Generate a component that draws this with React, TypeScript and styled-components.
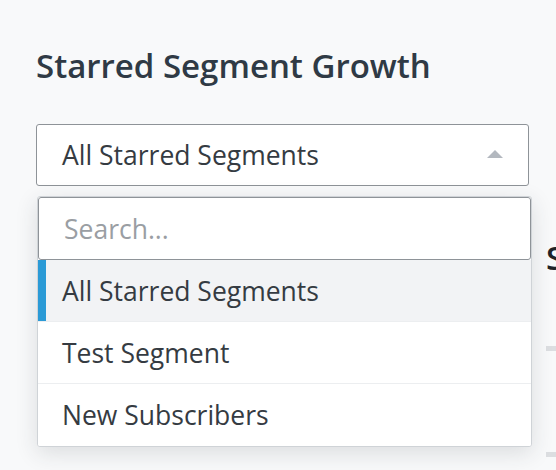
import React from "react";
import styled, { createGlobalStyle } from "styled-components";

const Global = createGlobalStyle`
  html, body { margin: 0; padding: 0; background: #f8f9fa; overflow: hidden; }
  body { font-family: "Open Sans", Lato, "Liberation Sans", sans-serif; width: 556px; height: 470px; }
  * { box-sizing: border-box; }
`;

const Page = styled.div`
  display: grid;
  grid-template-columns: 493px 1fr;
  column-gap: 17px;
  padding: 46px 0 0 36px;
  width: 556px;
  height: 470px;
  overflow: hidden;
`;

const Column = styled.div`
  display: flex;
  flex-direction: column;
  min-width: 0;
`;

const Title = styled.h2`
  margin: 0;
  font-size: 33px;
  line-height: 40px;
  font-weight: 600;
  color: #2f3a45;
  white-space: nowrap;
`;

const SelectWrap = styled.div`
  position: relative;
  margin-top: 38px;
`;

const SelectBox = styled.div`
  height: 62px;
  border: 1px solid #8e9398;
  border-radius: 3px;
  background: #fff;
  display: flex;
  align-items: center;
  justify-content: space-between;
  padding: 0 25px 0 25px;
  font-size: 26.5px;
  color: #353b42;
`;

const Caret = styled.span`
  width: 0;
  height: 0;
  border-left: 8px solid transparent;
  border-right: 8px solid transparent;
  border-bottom: 8px solid #b3b8bf;
  margin-bottom: 2px;
`;

const Menu = styled.div`
  position: absolute;
  top: 72px;
  left: 1px;
  width: 495px;
  background: #fff;
  border: 1px solid #cfd3d7;
  border-radius: 3px;
  box-shadow: 0 6px 22px rgba(40, 50, 60, 0.14);
  overflow: hidden;
  z-index: 2;
`;

const Search = styled.input`
  display: block;
  width: 100%;
  height: 63px;
  margin: 0;
  border: 1px solid #8e9398;
  border-radius: 3px;
  padding: 0 25px;
  font-family: inherit;
  font-size: 26.5px;
  color: #353b42;
  background: #fff;
  outline: none;
  &::placeholder { color: #9a9ea3; }
`;

const Item = styled.div<{ $active?: boolean }>`
  height: 62px;
  display: flex;
  align-items: center;
  padding-left: 24px;
  font-size: 26.5px;
  color: #353b42;
  background: ${(p) => (p.$active ? "#f2f3f5" : "#fff")};
  box-shadow: ${(p) => (p.$active ? "inset 8px 0 0 #2b9ad6" : "none")};
  border-bottom: 1px solid #eceef0;
  &:last-child { border-bottom: none; }
`;

const SideTitle = styled.h2`
  margin: 192px 0 0;
  font-size: 33px;
  line-height: 40px;
  font-weight: 600;
  color: #1f2328;
  white-space: nowrap;
`;

const GridLine = styled.div<{ $gap: number }>`
  height: 5px;
  width: 200px;
  background: #dcdee1;
  margin-top: ${(p) => p.$gap}px;
`;

export default function App() {
  return (
    <>
      <Global />
      <Page>
        <Column>
          <Title>Starred Segment Growth</Title>
          <SelectWrap>
            <SelectBox>
              <span>All Starred Segments</span>
              <Caret />
            </SelectBox>
            <Menu>
              <Search placeholder="Search..." />
              <Item $active>All Starred Segments</Item>
              <Item>Test Segment</Item>
              <Item>New Subscribers</Item>
            </Menu>
          </SelectWrap>
        </Column>
        <Column>
          <SideTitle>Subscribers</SideTitle>
          <GridLine $gap={68} />
          <GridLine $gap={101} />
        </Column>
      </Page>
    </>
  );
}
